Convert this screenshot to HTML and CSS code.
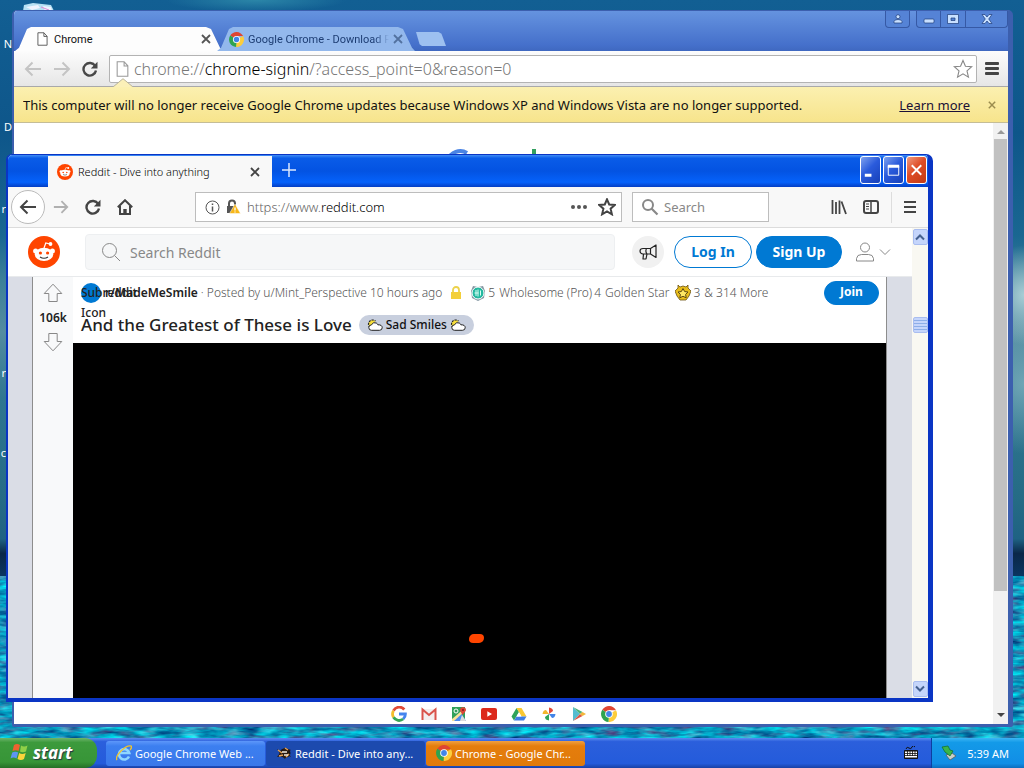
FILE: index.html
```html
<!DOCTYPE html>
<html lang="en">
<head>
<meta charset="utf-8">
<title>Desktop</title>
<link rel="stylesheet" href="styles.css">
</head>
<body>
<svg class="defs" aria-hidden="true">
  <defs>
    <filter id="water" x="0" y="0" width="100%" height="100%" color-interpolation-filters="sRGB">
      <feTurbulence type="fractalNoise" baseFrequency="0.05 0.2" numOctaves="3" seed="4"/>
      <feColorMatrix values=".8 0 0 0 -.34  0 1 0 0 .08  0 .7 0 0 .38  0 0 0 0 1"/>
    </filter>
    <symbol id="i-page" viewBox="0 0 12 15"><path d="M1 .7h6.500L11 4.500v9.800H1zM7.500.7v4H11" fill="#fff" stroke="currentColor"/></symbol>
    <symbol id="i-x" viewBox="0 0 10 10"><path d="M1 1l8 8M9 1L1 9" fill="none" stroke="currentColor" stroke-width="1.800"/></symbol>
    <symbol id="i-arrow" viewBox="0 0 18 16"><path d="M17 8H2M8.500 1.500L2 8l6.500 6.500" fill="none" stroke="currentColor" stroke-width="2"/></symbol>
    <symbol id="i-reload" viewBox="0 0 16 16"><path d="M13.200 5A6.300 6.300 0 1 0 14 9.500" fill="none" stroke="currentColor" stroke-width="2.400"/><path d="M15.500.8v6.700H8.800z" fill="currentColor"/></symbol>
    <symbol id="i-star" viewBox="0 0 18 18"><path d="M9 1.300l2.200 5.200 5.600.5-4.200 3.700 1.300 5.600L9 13.400l-4.900 2.900 1.300-5.600L1.200 7l5.600-.5z" fill="none" stroke="currentColor"/></symbol>
    <symbol id="i-search" viewBox="0 0 20 20"><circle cx="8.500" cy="8.500" r="7" fill="none" stroke="currentColor"/><path d="M13.500 13.500L19 19" stroke="currentColor"/></symbol>
    <symbol id="i-lens" viewBox="0 0 18 18"><circle cx="7" cy="7" r="5" fill="none" stroke="currentColor" stroke-width="2"/><path d="M10.500 10.500L16.500 16.500" stroke="currentColor" stroke-width="2.200"/></symbol>
    <symbol id="i-chrome" viewBox="0 0 16 16"><path d="M8 8L1.300 3.700A8 8 0 0 1 15 4.200H8z" fill="#df4532"/><path d="M8 8l7-3.800A8 8 0 0 1 7.500 16z" fill="#fccd3c"/><path d="M8 8l-.5 8A8 8 0 0 1 1.300 3.700z" fill="#2fa34f"/><circle cx="8" cy="8" r="3.800" fill="#fff"/><circle cx="8" cy="8" r="2.900" fill="#4285e8"/></symbol>
    <symbol id="i-snoo" viewBox="0 0 32 32"><circle cx="16" cy="16" r="16" fill="#ff4500"/><path d="M16 12l1.800-5 4.200 1" fill="none" stroke="#fff" stroke-width="1.200"/><circle cx="22.500" cy="8" r="1.900" fill="#fff"/><circle cx="7.600" cy="15" r="2.500" fill="#fff"/><circle cx="24.400" cy="15" r="2.500" fill="#fff"/><ellipse cx="16" cy="18.300" rx="9.300" ry="6.600" fill="#fff"/><circle cx="12.400" cy="17" r="1.600" fill="#ff4500"/><circle cx="19.600" cy="17" r="1.600" fill="#ff4500"/><path d="M12 21q4 2.600 8 0" fill="none" stroke="#333" stroke-width="1.100"/></symbol>
    <symbol id="i-vote" viewBox="0 0 20 20"><path d="M10 1.200L1.200 10.500h4.600v8h8.400v-8h4.600z" fill="none" stroke="currentColor" stroke-linejoin="round"/></symbol>
    <symbol id="i-cloud" viewBox="0 0 16 12"><path d="M3 8.500A4.200 4.200 0 1 1 8.500 2" fill="#f7df3c" stroke="#222" stroke-width="1.200" stroke-dasharray="2 1"/><path d="M4.500 11.300a2.700 2.700 0 0 1 0-5.400Q6 2.500 9.300 4q1 .5 1.600 1.800 4.200-.2 4.300 2.900 0 2.500-2.700 2.600z" fill="#fff" stroke="#222"/></symbol>
    <symbol id="i-chevron" viewBox="0 0 10 8"><path d="M1 1.500l4 4 4-4" fill="none" stroke="currentColor" stroke-width="2"/></symbol>
  </defs>
</svg>

<div class="desktop">
  <main class="workspace">
    <svg class="sea" aria-hidden="true"><rect width="100%" height="100%" filter="url(#water)"/></svg>
    <svg class="bin" viewBox="0 0 32 8" aria-hidden="true"><path d="M1 2l9-2 18 2 3 6H0z" fill="#b7e1f4"/><path d="M3 4l12-2 2 3-8 2zM20 3l8 1 1 4h-7z" fill="#eef4ff"/><path d="M18 4l8 3" stroke="#df8bd6"/></svg>
    <span class="label label-a">N</span>
    <span class="label label-b">D</span>
    <span class="label label-c">r</span>
    <span class="label label-d">r</span>
    <span class="label label-e">c</span>

    <section class="chrome" aria-label="Chrome">
      <div class="chrome-title">
        <div class="chrome-tabs">
          <div class="ctab ctab-on"><svg class="page-s"><use href="#i-page"/></svg><span class="ctab-text">Chrome</span><button class="bare" aria-label="Close tab"><svg class="s10"><use href="#i-x"/></svg></button></div>
          <div class="ctab ctab-off"><svg class="s15"><use href="#i-chrome"/></svg><span class="ctab-text fade">Google Chrome - Download F</span><button class="bare" aria-label="Close tab"><svg class="s10"><use href="#i-x"/></svg></button></div>
          <button class="newtab" aria-label="New tab"></button>
        </div>
        <div class="chrome-controls">
          <button class="cc cc-user" aria-label="User"><svg width="10" height="10" viewBox="0 0 10 10"><circle cx="5" cy="2.700" r="2"/><path d="M1 9V7.500Q1.500 5.500 5 5.500t4 2V9z"/></svg></button>
          <button class="cc" aria-label="Minimize"><svg width="12" height="10" viewBox="0 0 12 10"><rect x="1" y="5" width="10" height="4" rx="1"/></svg></button>
          <button class="cc" aria-label="Maximize"><svg width="12" height="10" viewBox="0 0 12 10"><path fill-rule="evenodd" d="M.5.5h11v9H.5zM4 4v2.500h4V4z"/></svg></button>
          <button class="cc cc-close" aria-label="Close"><svg width="12" height="10" viewBox="0 0 12 10"><path d="M1 .5h3l2 2.500L8 .5h3L7.700 5 11 9.500H8L6 7 4 9.500H1L4.300 5z"/></svg></button>
        </div>
      </div>
      <div class="chrome-bar">
        <button class="bare dim" aria-label="Back"><svg class="s18"><use href="#i-arrow"/></svg></button>
        <button class="bare dim flip" aria-label="Forward"><svg class="s18"><use href="#i-arrow"/></svg></button>
        <button class="bare dark" aria-label="Reload"><svg class="s16"><use href="#i-reload"/></svg></button>
        <div class="omnibox">
          <svg class="page-m"><use href="#i-page"/></svg>
          <span class="omni-text" role="textbox" aria-label="Address">chrome://<b>chrome-signin</b>/?access_point=0&amp;reason=0</span>
          <button class="bare grey" aria-label="Bookmark"><svg class="s20"><use href="#i-star"/></svg></button>
        </div>
        <button class="bare burger" aria-label="Menu"><i></i><i></i><i></i></button>
      </div>
      <div class="infobar">
        <svg class="infobar-tip" viewBox="0 0 20 9" aria-hidden="true"><path d="M0 9L10 .7 20 9" fill="#fbf0b8" stroke="#b9b49a"/></svg>
        <span class="info-text">This computer will no longer receive Google Chrome updates because Windows XP and Windows Vista are no longer supported.</span>
        <a href="#" class="learn">Learn more</a>
        <button class="bare tan" aria-label="Dismiss"><svg class="s8"><use href="#i-x"/></svg></button>
      </div>
      <div class="chrome-page">
        <div class="chrome-content">
          <svg class="google" viewBox="0 0 116 12" aria-hidden="true"><path d="M2 12A13 13 0 0 1 21 5" fill="none" stroke="#4a84e4" stroke-width="4"/><path d="M88 1v11" stroke="#34a060" stroke-width="4"/></svg>
          <div class="apps">
            <svg viewBox="0 0 16 16"><path d="M13.300 3.500A6.500 6.500 0 0 0 2.500 4.700" fill="none" stroke="#e04a38" stroke-width="2.800"/><path d="M2.500 4.700a6.500 6.500 0 0 0 0 6.600" fill="none" stroke="#f4be2c" stroke-width="2.800"/><path d="M2.500 11.300a6.500 6.500 0 0 0 9.700 1.700" fill="none" stroke="#35a656" stroke-width="2.800"/><path d="M8 8h6.400a6.500 6.500 0 0 1-2.200 5" fill="none" stroke="#4484ee" stroke-width="2.800"/></svg>
            <svg viewBox="0 0 16 16"><path d="M1 3h14v11H1z" fill="#f3eeee"/><path d="M1.500 14V3.500L8 9l6.500-5.500V14" fill="none" stroke="#d9534b" stroke-width="2"/></svg>
            <svg viewBox="0 0 16 16"><path d="M1 1h13v14H1z" fill="#31a05a"/><path d="M2 15l8-8 5 8z" fill="#4b8bec"/><path d="M1 13L14 2v3L3 15H1z" fill="#f7e39a"/><path d="M9 15l2-6 4 6z" fill="#ddd"/><circle cx="5" cy="5" r="2" fill="none" stroke="#fff"/><path d="M11.500 9L9 4.500A3 3 0 1 1 15 4q0 1-3.500 5z" fill="#dc4538"/><circle cx="12" cy="4" r="1" fill="#7d1c1c"/></svg>
            <svg viewBox="0 0 16 16"><rect y="2" width="16" height="12" rx="2" fill="#dc2a1c"/><path d="M6.300 5.300v5.400L11 8z" fill="#fff"/></svg>
            <svg viewBox="0 0 16 16"><path d="M5.500 2L.5 10.500 3 14.500l5-8.500z" fill="#2fa35a"/><path d="M5.500 2h5l5 8.500h-5z" fill="#fac832"/><path d="M5.500 10.500h10L13 14.500H3z" fill="#3e7ee6"/><path d="M8 6.300l2.500 4.200h-5z" fill="#fff"/></svg>
            <svg viewBox="0 0 16 16"><path d="M8 8V1.500Q12 2 12 5L8 8" fill="#e04838"/><path d="M8 8h6.500Q14 12 11 12z" fill="#4385e8"/><path d="M8 8v6.500Q4 14 4 11z" fill="#2fa35a"/><path d="M8 8H1.500Q2 4 5 4z" fill="#f3b72c"/></svg>
            <svg viewBox="0 0 16 16"><path d="M2 1v14l7-7z" fill="#55bdd0"/><path d="M2 1l9.500 5L9 8z" fill="#4bb27a"/><path d="M2 15l9.500-5L9 8z" fill="#dd5544"/><path d="M11.500 6L15 8l-3.500 2L9 8z" fill="#f2b63a"/></svg>
            <svg><use href="#i-chrome"/></svg>
          </div>
        </div>
        <div class="cscroll"><i class="tri up"></i><div class="cthumb"></div><div class="ctrack"></div><i class="tri down"></i></div>
      </div>
    </section>

    <section class="fox" aria-label="Firefox">
      <div class="fox-title">
        <div class="ftab"><svg class="s16"><use href="#i-snoo"/></svg><span class="ftab-text">Reddit - Dive into anything</span><button class="bare" aria-label="Close tab"><svg class="s10"><use href="#i-x"/></svg></button></div>
        <button class="bare fplus" aria-label="New tab"><svg width="14" height="14" viewBox="0 0 14 14"><path d="M7 0v14M0 7h14" stroke="#dbe9ff" stroke-width="1.500"/></svg></button>
        <div class="fox-controls">
          <button class="xp" aria-label="Minimize"><svg viewBox="0 0 20 26"><path d="M4 17h7v3H4z" fill="#fff"/></svg></button>
          <button class="xp" aria-label="Maximize"><svg viewBox="0 0 20 26"><path d="M4.500 9v9.500h11V9" fill="none" stroke="#fff"/><path d="M4 7.500h12v3H4z" fill="#fff"/></svg></button>
          <button class="xp xp-red" aria-label="Close"><svg viewBox="0 0 20 26"><path d="M5 8l10 10M15 8L5 18" stroke="#fff" stroke-width="2"/></svg></button>
        </div>
      </div>
      <div class="fox-bar">
        <div class="fox-nav">
          <button class="bare back" aria-label="Back"><svg class="s18"><use href="#i-arrow"/></svg></button>
          <button class="bare flip fdim" aria-label="Forward"><svg class="s16"><use href="#i-arrow"/></svg></button>
          <button class="bare" aria-label="Reload"><svg class="s16"><use href="#i-reload"/></svg></button>
          <button class="bare" aria-label="Home"><svg width="16" height="16" viewBox="0 0 16 16"><path d="M.8 8.300L8 1.200l7.200 7.100M3 7v8h10V7" fill="none" stroke="currentColor" stroke-width="2"/><path d="M6.300 15v-5h3.400v5z" fill="currentColor"/></svg></button>
        </div>
        <div class="furl">
          <svg width="15" height="15" viewBox="0 0 15 15"><circle cx="7.500" cy="7.500" r="6.500" fill="none" stroke="#555"/><path d="M7.500 6.500v5M7.500 3.500v1.500" stroke="#555" stroke-width="1.500"/></svg>
          <svg width="15" height="16" viewBox="0 0 15 16"><path d="M3 7V4.500a3 3 0 0 1 6 0V7" fill="none" stroke="#555" stroke-width="2"/><path d="M1 7h9v7H1z" fill="#555"/><path d="M9 5l5.500 9.500h-11z" fill="#f7b617" stroke="#fff" stroke-width=".5"/><path d="M9 8.500v3M9 12.500v1" stroke="#fff" stroke-width="1.300"/></svg>
          <span class="furl-text" role="textbox" aria-label="Address">https://www.<b>reddit.com</b></span>
          <button class="bare dots" aria-label="Page actions"><i></i><i></i><i></i></button>
          <button class="bare bold-icon" aria-label="Bookmark"><svg class="s18"><use href="#i-star"/></svg></button>
        </div>
        <label class="fsearch"><svg class="s18"><use href="#i-lens"/></svg><input type="search" placeholder="Search" aria-label="Search the web"></label>
        <div class="fox-tools">
          <button class="bare" aria-label="Library"><svg width="16" height="16" viewBox="0 0 16 16"><path d="M1.500 1v14M5 3v12M8.500 1.500V15M10.500 2.500L15 15" stroke="currentColor" stroke-width="1.800"/></svg></button>
          <button class="bare" aria-label="Sidebar"><svg width="16" height="16" viewBox="0 0 16 16"><rect x="1" y="2" width="14" height="12" rx="2" fill="none" stroke="currentColor" stroke-width="2"/><path d="M8 2v12" stroke="currentColor" stroke-width="1.500"/><path d="M3 5h3M3 7.500h3M3 10h3" stroke="currentColor"/></svg></button>
          <span class="sep"></span>
          <button class="bare" aria-label="Menu"><svg width="12" height="14" viewBox="0 0 12 14"><path d="M0 2h12M0 7h12M0 12h12" stroke="currentColor" stroke-width="2"/></svg></button>
        </div>
      </div>
      <div class="fox-page">
        <div class="reddit">
          <header class="rhead">
            <a href="#" class="rlogo" aria-label="Reddit"><svg width="32" height="32"><use href="#i-snoo"/></svg></a>
            <label class="rsearch"><svg class="s20"><use href="#i-search"/></svg><input type="search" placeholder="Search Reddit" aria-label="Search Reddit"></label>
            <button class="bare mega" aria-label="Advertise"><svg width="20" height="20" viewBox="0 0 20 20"><path d="M18 3v12.500L12.500 12H5a3 3 0 0 1-3-3q0-2.500 3-2.500h7.500zM12.500 6.500V12M5.500 12L5 17h3l1-5M8.500 6.500q-1.500 3 .5 5.500" fill="none" stroke="#222" stroke-width="1.200" stroke-linejoin="round"/></svg></button>
            <button class="pill login">Log In</button>
            <button class="pill signup">Sign Up</button>
            <button class="bare user" aria-label="Account"><svg width="20" height="20" viewBox="0 0 20 20"><circle cx="10" cy="5.500" r="4.500" fill="none" stroke="#888"/><path d="M1.500 19v-2.500q.5-4 5-4h7q4.500 0 5 4V19z" fill="none" stroke="#888"/></svg><svg width="12" height="10" viewBox="0 0 12 10"><path d="M1 2.500l5 5 5-5" fill="none" stroke="#888"/></svg></button>
          </header>
          <article class="post">
            <div class="votes">
              <button class="bare" aria-label="Upvote"><svg class="s20"><use href="#i-vote"/></svg></button>
              <span>106k</span>
              <button class="bare vflip" aria-label="Downvote"><svg class="s20"><use href="#i-vote"/></svg></button>
            </div>
            <div class="body">
              <div class="meta">
                <span class="subicon"><span class="alt">Subreddit Icon</span></span>
                <a href="#" class="sub">r/MadeMeSmile</a>
                <span class="by">· Posted by u/Mint_Perspective 10 hours ago</span>
                <svg class="lock" width="12" height="14" viewBox="0 0 12 14"><path d="M3 7V4a3 3 0 0 1 6 0v3" fill="none" stroke="#ecd24b" stroke-width="1.800"/><rect x="1" y="6" width="10" height="7" fill="#f3cf3a"/></svg>
                <span class="award"><svg width="16" height="16" viewBox="0 0 16 16"><path d="M3 1l5 1 5-1 2 5-1 7-6 3-6-3-1-7z" fill="#8496a2"/><circle cx="8" cy="8" r="6" fill="#24b8a0" stroke="#fff"/><path d="M6 5v6M8 4.500v7M10.500 5.500v5M4.500 8h4" stroke="#d9fff4"/></svg>5</span>
                <span class="aname">Wholesome (Pro)</span>
                <span>4</span>
                <span class="aname gs">Golden Star</span>
                <span class="award"><svg width="16" height="16" viewBox="0 0 16 16"><path d="M3 0l2 2 3-1 3 1 2-2v3l3 3-2 5-3 4H5l-3-4-2-5 3-3z" fill="#e8bd1b" stroke="#6a5213" stroke-width=".8"/><path d="M8 3.500l1.600 3 3.400.5-2.400 2.400.6 3.400L8 11.300l-3.200 1.500.6-3.400L3 7l3.400-.5z" fill="#ffe864" stroke="#5d4a12"/></svg>3</span>
                <span class="aname">&amp; 314 More</span>
                <button class="pill join">Join</button>
              </div>
              <div class="headline">
                <h1>And the Greatest of These is Love</h1>
                <span class="flair"><svg width="16" height="12"><use href="#i-cloud"/></svg>Sad Smiles<svg width="16" height="12"><use href="#i-cloud"/></svg></span>
              </div>
              <div class="video"><span class="blob"></span></div>
            </div>
          </article>
        </div>
        <div class="xscroll">
          <button class="xarrow vflip" aria-label="Scroll up"><svg width="10" height="8"><use href="#i-chevron"/></svg></button>
          <div class="xthumb"></div>
          <button class="xarrow" aria-label="Scroll down"><svg width="10" height="8"><use href="#i-chevron"/></svg></button>
        </div>
      </div>
    </section>
  </main>

  <footer class="taskbar">
    <button class="start"><svg width="20" height="20" viewBox="0 0 20 20"><path d="M4 3q3-2 6 0L8.500 9Q6 7.500 2.500 9z" fill="#ef6230"/><path d="M11 3.500q3 2 6.500 0L16 9.500q-3.500 1.500-6 0z" fill="#8fd048"/><path d="M2.200 10.500q3-1.500 6 0L6.500 16.500q-3-2-6 0z" fill="#5e95f2"/><path d="M9.200 11q3 2 6.500 0L14 17q-3 2-6.500 0z" fill="#fbd43b"/></svg>start</button>
    <div class="tasks">
      <button class="task"><svg width="16" height="16" viewBox="0 0 16 16"><path d="M13 11.500A5.200 5.200 0 1 1 13.300 8H4" fill="none" stroke="#8fd6ff" stroke-width="2.600"/><path d="M1 15Q-1 12 5 6t10-5q1.500 1-1 4" fill="none" stroke="#f0c22e" stroke-width="1.400"/></svg><span>Google Chrome Web ...</span></button>
      <button class="task pressed"><svg width="16" height="16" viewBox="0 0 16 16"><ellipse cx="9" cy="8" rx="5.500" ry="4.500" fill="#1a1414"/><path d="M1 4l5 3 2-4 4 1 3 1-3 2 3 5-4-2-2 4-3-3-5 1 3-4z" fill="#2b1b12"/><path d="M2 5l4 3M9 3l3 2M3 11l4-1M10 12l3-3" stroke="#e6a154" stroke-width="1.500"/><path d="M6 7h5M8 10h4" stroke="#f4eadc" stroke-width="1.500"/></svg><span>Reddit - Dive into any...</span></button>
      <button class="task orange"><svg width="16" height="16"><use href="#i-chrome"/></svg><span>Chrome - Google Chr...</span></button>
    </div>
    <svg class="keys" width="14" height="14" viewBox="0 0 14 14"><path d="M2 3q1-3 3-1t3-1 3 0" fill="none" stroke="#111"/><rect y="4" width="14" height="9" rx="1" fill="#111"/><path d="M1 5.500h12v6H1z" fill="#fff"/><path d="M1 7.500h12M1 9.500h12M3.500 5v5M6 5v5M8.500 5v5M11 5v5" stroke="#111" stroke-width=".8"/></svg>
    <div class="tray"><svg width="16" height="16" viewBox="0 0 16 16"><path d="M5 10l6-2 4 3-6 4z" fill="#c9cfc9" stroke="#555" stroke-width=".7"/><path d="M1 2l6-1 2 4 3 1-3 5-5-4z" fill="#39b54a" stroke="#136b22" stroke-width=".7"/></svg><time>5:39 AM</time></div>
  </footer>
</div>
</body>
</html>
```
FILE: styles.css
```css
* { box-sizing: border-box; }
body { margin: 0; font-family: "Noto Sans", "Open Sans", sans-serif; font-size: 12px; color: #222; }
button, input { font: inherit; color: inherit; }
svg { flex: none; display: block; }
.defs { position: absolute; width: 0; height: 0; }
.bare { display: flex; align-items: center; justify-content: center; padding: 0; border: 0; background: none; color: inherit; flex: none; }
.s8 { width: 8px; height: 8px; }
.s10 { width: 10px; height: 10px; }
.s15 { width: 15px; height: 15px; }
.s16 { width: 16px; height: 16px; }
.s18 { width: 18px; height: 18px; }
.s20 { width: 20px; height: 20px; }
.flip { transform: scaleX(-1); }
.vflip { transform: scaleY(-1); }

.desktop { display: flex; flex-direction: column; height: 100vh; min-height: 480px; overflow: hidden; }
.workspace { position: relative; flex: 1; overflow: hidden; background: radial-gradient(40px 50px at 100% 40%, #a9cdd5, transparent), radial-gradient(60px 70px at 100% 52%, #6fa5b5, transparent), radial-gradient(90px 12px at 25% 0, #2b86a8, transparent), linear-gradient(#125f93 0, #0e568a 18%, #1a6791 32%, #3c8098 38%, #548ca0 45%, #2f7690 54%, #256b85 68%, #1f6283 73%, #0a2748 75%, #0b3560 78%, #0a90bd 80%); }
.sea { position: absolute; left: 0; bottom: 0; width: 100%; height: 22%; }
.bin { position: absolute; left: 23px; top: 3px; width: 32px; height: 8px; }
.label { position: absolute; left: 0; width: 12px; color: #fff; font-size: 11px; line-height: 14px; text-align: right; }
.label-a { top: 37px; }
.label-b { top: 120px; }
.label-c, .label-d, .label-e { width: 6px; }
.label-c { top: 202px; }
.label-d { top: 366px; }
.label-e { top: 446px; }

/* Chrome window */
.chrome { position: absolute; inset: 10px 11px 11px 12px; display: flex; flex-direction: column; border: solid #3c5fae; border-width: 1px 5px 3px 2px; border-radius: 5px 5px 2px 2px; background: #fff; overflow: hidden; }
.chrome-title { display: flex; align-items: flex-end; justify-content: space-between; height: 40px; flex: none; background: linear-gradient(#6593df, #4570cb 85%, #3f68c0); }
.chrome-tabs { display: flex; align-items: flex-end; padding-left: 1px; }
.ctab { display: flex; align-items: center; height: 24px; font-family: Roboto, "Noto Sans", sans-serif; font-size: 11px; clip-path: polygon(0 100%, 4px 86%, 12px 8%, 16px 0, calc(100% - 17px) 0, calc(100% - 12px) 8%, calc(100% - 3px) 86%, 100% 100%); }
.ctab-on { width: 208px; padding: 0 12px 0 22px; background: #fdfdfd; color: #111; gap: 6px; }
.ctab-on .bare { color: #555; }
.ctab-off { width: 198px; margin-left: -6px; padding: 0 12px; gap: 4px; background: #93b8ec; color: #1d3d73; }
.ctab-off .bare { color: #52719f; }
.ctab-text { flex: 1; min-width: 0; overflow: hidden; white-space: nowrap; }
.fade { -webkit-mask-image: linear-gradient(90deg, #000 90%, transparent); mask-image: linear-gradient(90deg, #000 90%, transparent); }
.page-s { width: 11px; height: 14px; color: #555; }
.page-m { width: 13px; height: 16px; color: #999; }
.newtab { width: 30px; height: 14px; margin: 0 0 5px 1px; padding: 0; border: 0; background: #9dc0f0; clip-path: polygon(0 0, 75% 0, 85% 12%, 100% 100%, 20% 100%, 12% 88%); }
.chrome-controls { display: flex; align-self: flex-start; }
.cc { display: flex; align-items: center; justify-content: center; width: 25px; height: 17px; padding: 0; border: 1px solid #3659a5; border-top: 0; background: #5583d6; fill: #c9e0ff; stroke: #1e3c78; stroke-width: .7; }
.cc + .cc { border-left: 0; }
.cc-user { margin-right: 6px; border-radius: 0 0 4px 4px; }
.cc.cc-user + .cc { border-left: 1px solid #3659a5; border-radius: 0 0 0 4px; }
.cc-close { width: 42px; border-radius: 0 0 4px 0; }
.chrome-bar { display: flex; align-items: center; gap: 11px; height: 36px; flex: none; padding: 0 9px 0 10px; background: linear-gradient(#fcfcfc, #e6e6e6); border-bottom: 1px solid #a9a9a9; }
.dim { color: #c4c4c4; }
.dark { color: #484848; }
.grey { color: #888; }
.tan { color: #9a8c4e; }
.omnibox { display: flex; align-items: center; gap: 5px; flex: 1; height: 28px; padding: 0 3px 0 6px; border: 1px solid #b3b3b3; border-radius: 2px; background: #fff; }
.omni-text { flex: 1; font-size: 16px; font-weight: 300; color: #777; white-space: nowrap; overflow: hidden; }
.omni-text b { font-weight: 300; color: #000; }
.burger { flex-direction: column; gap: 2px; }
.burger i { width: 14px; height: 3px; border-radius: 1px; background: #444; }
.chrome-bar .burger { margin-left: -3px; }
.infobar { position: relative; display: flex; align-items: center; height: 36px; flex: none; padding: 0 12px 0 9px; background: linear-gradient(#fbf0b0, #f7e48c); border-bottom: 1px solid #c5bd96; font-size: 13px; color: #111; }
.infobar-tip { position: absolute; left: 99px; top: -9px; width: 20px; height: 9px; }
.info-text { flex: 1; white-space: nowrap; overflow: hidden; }
.learn { color: #1b1036; margin-right: 18px; white-space: nowrap; }
.chrome-page { display: flex; flex: 1; min-height: 0; }
.chrome-content { display: flex; flex-direction: column; align-items: center; justify-content: space-between; flex: 1; padding: 25px 0 2px; }
.google { width: 116px; height: 12px; }
.apps { display: flex; gap: 14px; }
.apps svg { width: 16px; height: 16px; }
.cscroll { display: flex; flex-direction: column; align-items: center; width: 15px; padding: 7px 0; background: #f1f1f1; }
.tri { border: 4px solid transparent; flex: none; }
.tri.up { border-top-width: 0; border-bottom-color: #999; margin-bottom: 5px; }
.tri.down { border-bottom-width: 0; border-top-color: #444; }
.cthumb { flex: 450; width: 13px; background: #c1c1c1; }
.ctrack { flex: 122; }

/* Firefox window */
.fox { position: absolute; inset: 154px 91px 36px 6px; display: flex; flex-direction: column; border: solid #0a35c4; border-width: 1px 5px 4px 2px; border-radius: 6px 7px 0 0; background: #f8f8f8; overflow: hidden; color: #444; }
.fox-title { display: flex; align-items: flex-start; height: 32px; flex: none; padding-left: 40px; background: linear-gradient(#3f8df5 0, #0a5ce8 10%, #0353e2 50%, #0562fb 85%, #043ec4 100%); }
.ftab { display: flex; align-items: center; gap: 5px; align-self: stretch; width: 224px; padding: 0 12px 0 9px; margin-top: 1px; background: #f8f8f8; font-size: 11px; font-weight: 300; color: #000; }
.ftab-text { flex: 1; white-space: nowrap; }
.ftab .bare { color: #444; }
.fplus { width: 34px; height: 30px; }
.fox-controls { display: flex; gap: 2px; margin-left: auto; padding-right: 1px; }
.xp { width: 21px; height: 28px; margin-top: 1px; padding: 0; border: 1px solid #fff; border-radius: 3px; background: linear-gradient(135deg, #7fa2ee, #2a5bdc 45%, #1740b8); }
.xp svg { width: 100%; height: 100%; }
.xp-red { background: linear-gradient(135deg, #f09b80, #de4c26 45%, #c23a14); }
.fox-bar { display: flex; align-items: center; height: 41px; flex: none; border-bottom: 1px solid #dcdcdc; }
.fox-nav { display: flex; align-items: center; gap: 16px; margin-right: 62px; padding-left: 3px; }
.back { width: 34px; height: 34px; border: 1px solid #bbb; border-radius: 50%; background: #fff; margin-right: -8px; }
.fdim { color: #b0b0b0; }
.furl, .fsearch { display: flex; align-items: center; height: 30px; border: 1px solid #bdbdbd; background: #fff; font-size: 13px; }
.furl { flex: 427 1 427px; gap: 6px; padding: 0 5px 0 9px; }
.furl-text { flex: 1; font-weight: 300; color: #666; white-space: nowrap; }
.furl-text b { font-weight: 300; color: #000; }
.dots { gap: 2px; margin-right: 5px; }
.dots i { width: 4px; height: 4px; border-radius: 50%; background: #555; }
.bold-icon { stroke-width: 2; }
.fsearch { flex: 137 1 137px; gap: 5px; margin-left: 10px; padding-left: 8px; color: #888; min-width: 0; }
.fsearch input, .rsearch input { flex: 1; min-width: 0; padding: 0; border: 0; background: none; outline: none; }
.fsearch input::placeholder, .rsearch input::placeholder { color: #888; opacity: 1; }
.fox-tools { display: flex; align-items: center; gap: 16px; margin-left: 62px; padding-right: 12px; }
.sep { width: 1px; height: 31px; background: #ddd; margin: 0 -4px 0 -4px; }
.fox-page { display: flex; flex: 1; min-height: 0; }
.reddit { display: flex; flex-direction: column; flex: 1; min-width: 0; background: #dadde6; }
.rhead { display: flex; align-items: center; height: 49px; flex: none; padding: 0 21px 0 20px; background: #fff; border-bottom: 1px solid #e8eaec; }
.rsearch { display: flex; align-items: center; gap: 9px; flex: 1; height: 36px; margin: 0 17px 0 25px; padding-left: 15px; border: 1px solid #edeff1; border-radius: 4px; background: #f6f7f8; color: #888; font-size: 14px; }
.mega { width: 32px; height: 32px; margin-right: 10px; border-radius: 50%; background: #f1f1f1; }
.pill { border: 1px solid #0079d3; border-radius: 16px; height: 32px; padding: 0 0 2px; font-size: 14px; font-weight: 700; }
.login { width: 78px; background: #fff; color: #0079d3; }
.signup { width: 86px; margin: 0 13px 0 4px; background: #0079d3; color: #fff; }
.user { gap: 4px; }
.post { display: flex; flex: 1; min-height: 0; margin: 0 25px 0 24px; background: #fff; border: solid #8d8d8d; border-width: 0 1px; }
.votes { display: flex; flex-direction: column; align-items: center; gap: 6px; width: 40px; flex: none; padding-top: 6px; background: #f8f9fa; color: #888; }
.votes span { font-size: 12px; line-height: 17px; font-weight: 600; color: #222; }
.body { display: flex; flex-direction: column; flex: 1; min-width: 0; }
.meta { display: flex; align-items: center; height: 31px; flex: none; padding: 0 7px 0 8px; font-weight: 300; color: #555; white-space: nowrap; }
.subicon { width: 20px; height: 20px; margin-right: 4px; border-radius: 50%; background: #0079d3; white-space: normal; flex: none; color: #222; line-height: 20px; }
.alt { display: block; width: 20px; font-weight: 500; }
.sub { color: #222; font-weight: 600; text-decoration: none; }
.by { margin-left: 3px; }
.lock { margin: 0 8px 0 8px; }
.award { display: flex; align-items: center; gap: 2px; }
.aname { margin: 0 2px 0 4px; }
.gs { margin-right: 6px; }
.join { width: 55px; height: 24px; margin-left: auto; background: #0079d3; color: #fff; font-size: 12px; }
.headline { display: flex; align-items: center; gap: 7px; height: 35px; flex: none; padding: 0 0 2px 8px; white-space: nowrap; }
h1 { margin: 0; font-size: 17px; line-height: 22px; font-weight: 500; color: #222; }
.flair { display: flex; align-items: center; gap: 3px; height: 20px; padding: 0 8px; border-radius: 10px; background: #c8cfde; color: #111; font-size: 12px; font-weight: 500; }
.video { display: flex; flex: 1; min-height: 0; align-items: flex-end; justify-content: center; padding: 0 6px 55px 0; background: #000; }
.blob { width: 15px; height: 9px; border-radius: 6px 5px 6px 5px; background: #ff4500; }
.xscroll { display: flex; flex-direction: column; align-items: center; justify-content: space-between; width: 16px; flex: none; padding: 1px 0; background: #f9f8f2; }
.xarrow { display: flex; align-items: center; justify-content: center; width: 15px; height: 16px; padding: 0; border: 1px solid #a9bdf0; border-radius: 2px; background: #c5d5fb; color: #44608f; }
.xthumb { width: 15px; height: 16px; margin-bottom: 276px; border: 1px solid #a9bdf0; border-radius: 2px; background: repeating-linear-gradient(#c5d5fb 0 2px, #8daee8 2px 3px); }

/* Taskbar */
.taskbar { display: flex; align-items: center; height: 30px; flex: none; background: linear-gradient(#5a8cf0 0, #2b5fdc 12%, #245bdb 85%, #1941a5 100%); color: #fff; }
.start { display: flex; align-items: center; gap: 3px; width: 97px; height: 30px; padding: 0 0 2px 10px; border: 0; border-radius: 0 12px 12px 0; background: linear-gradient(#6fb56c 0, #3c9a3c 15%, #379537 80%, #256f26 100%); color: #fff; font-size: 17px; font-weight: 700; font-style: italic; text-shadow: 1px 1px 1px #234; }
.tasks { display: flex; gap: 1px; flex: 1; padding-left: 9px; min-width: 0; }
.task { display: flex; align-items: center; gap: 3px; width: 159px; height: 25px; padding: 0 10px; border: 0; border-radius: 3px; background: linear-gradient(#5d97fa, #3c7ff0 20%, #3a78ea); color: #fff; font-size: 11px; white-space: nowrap; }
.pressed { background: #1c4aae; }
.orange { background: linear-gradient(#f0a040, #e57d0c 20%, #e07a0a); }
.keys { margin-right: 13px; }
.tray { display: flex; align-items: center; gap: 10px; align-self: stretch; padding: 0 15px 0 9px; border-left: 1px solid #0d3fa0; background: linear-gradient(#3cb5f4 0, #139ae8 15%, #118ee6 85%, #0d6dbd 100%); font-size: 11px; }
```
